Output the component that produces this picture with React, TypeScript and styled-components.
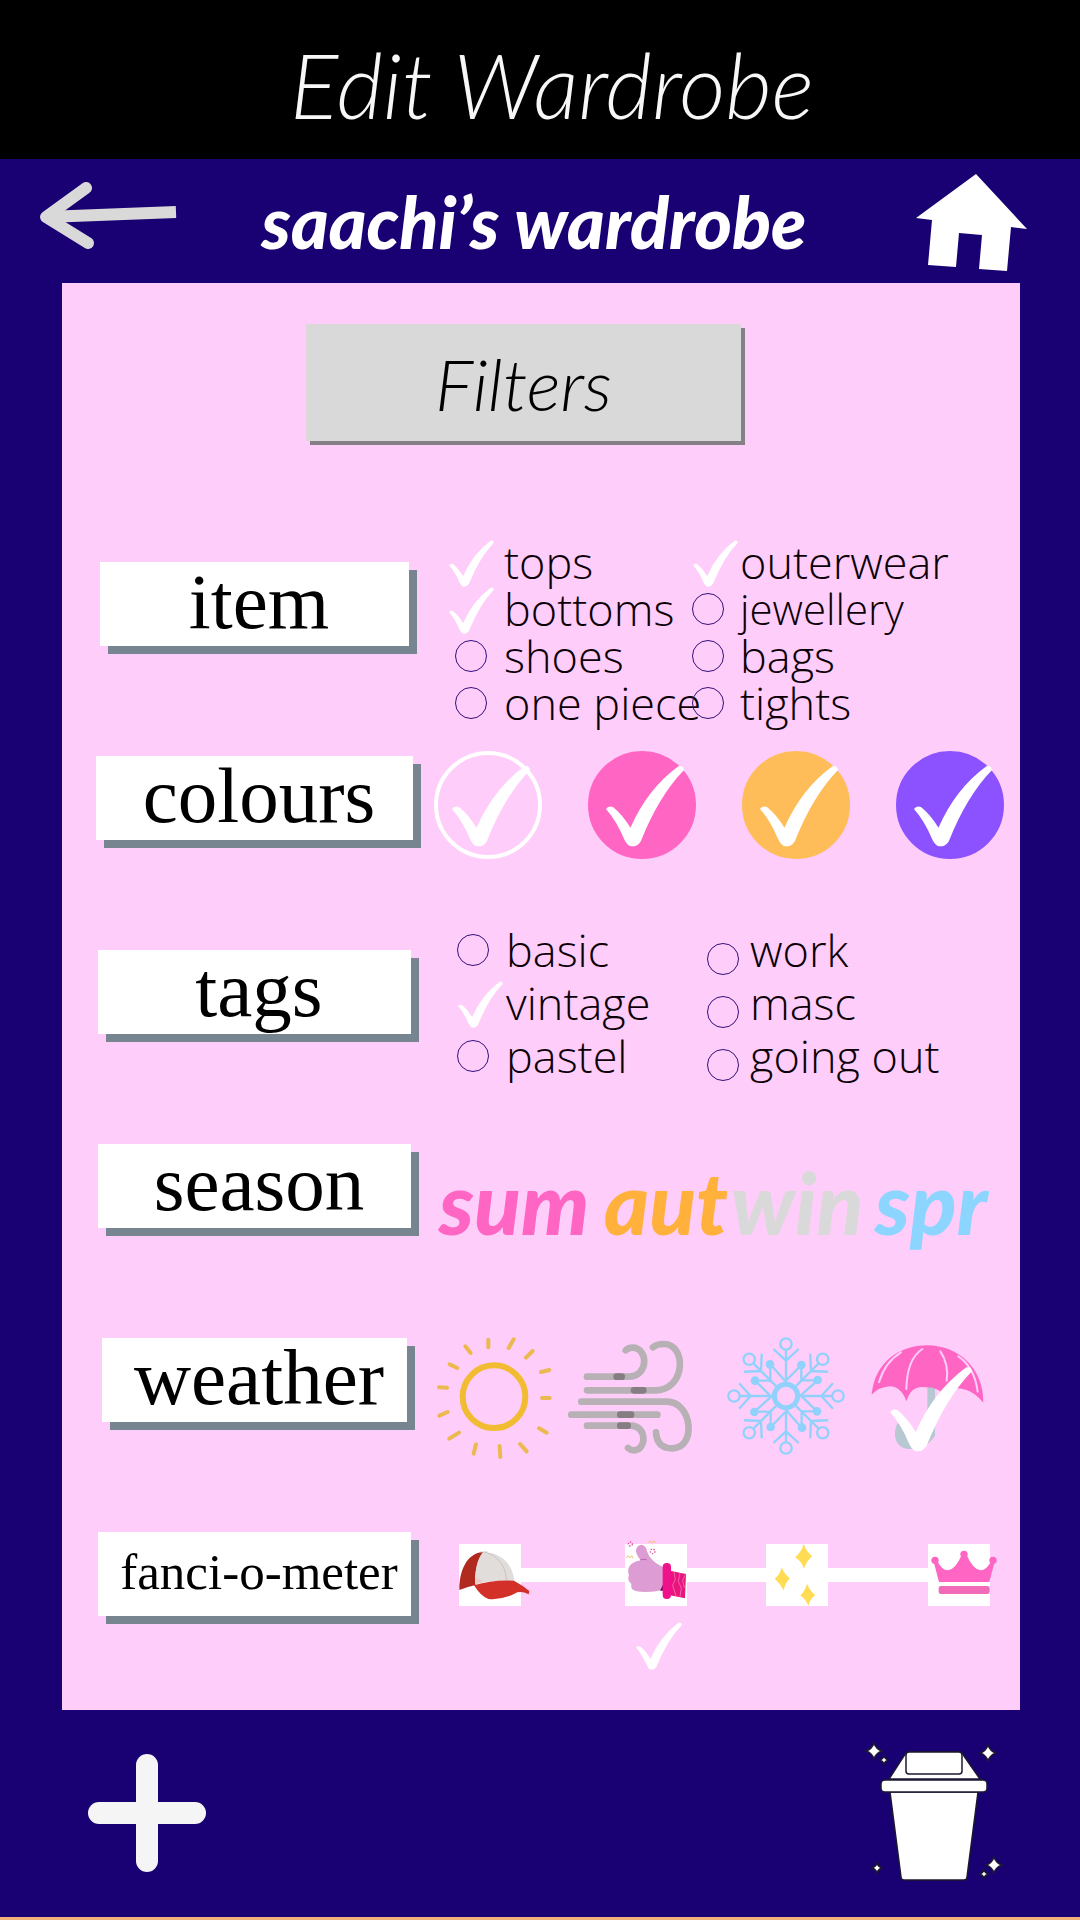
import React, { useState } from "react";
import styled, { createGlobalStyle } from "styled-components";

const color = {
  navy: "#190073",
  blush: "#ffcdfa",
  pink: "#ff66c4",
  orange: "#ffbd59",
  purple: "#8c52ff",
  grey: "#d9d9d9",
  shadow: "#778590",
};

const script = `Lato, "Open Sans", sans-serif`;

const GlobalStyle = createGlobalStyle`
  *, *::before, *::after { box-sizing: border-box; }
  body { margin: 0; background: ${color.navy}; }
  button { font: inherit; color: inherit; background: none; border: 0; padding: 0; cursor: pointer; }
  svg { display: block; overflow: visible; }
`;

const Page = styled.div`
  min-height: 100vh;
  display: flex;
  flex-direction: column;
  background: ${color.navy};
  border-bottom: 3px solid #f0b07c;
`;

const TopBar = styled.header`
  display: flex;
  align-items: center;
  justify-content: center;
  min-height: 159px;
  padding: 8px 0 0 24px;
  background: #000;
`;

const PageTitle = styled.h1`
  margin: 0;
  font: italic 300 90px/100px ${script};
  color: #f7f7f7;
`;

const NavBar = styled.nav`
  display: grid;
  grid-template-columns: 1fr auto 1fr;
  align-items: center;
  min-height: 124px;
  padding: 0 52px 0 40px;
`;

const NavLink = styled.a<{ $end?: boolean }>`
  justify-self: ${(p) => (p.$end ? "end" : "start")};
`;

const OwnerTitle = styled.h2`
  margin: 0;
  font: italic 900 72px/80px ${script};
  color: #fff;
`;

const Panel = styled.main`
  margin: 0 60px 0 62px;
  padding: 41px 16px 6px 34px;
  background: ${color.blush};
`;

const FiltersButton = styled.button`
  && {
    display: block;
    width: 435px;
    height: 117px;
    margin: 0 0 99px 210px;
    background: ${color.grey};
    box-shadow: 4px 4px 0 #858085;
    font: italic 300 72px/80px ${script};
    color: #000;
  }
`;

const Rows = styled.div`
  display: grid;
  grid-auto-rows: minmax(194px, auto);
`;

const Row = styled.section`
  display: grid;
  grid-template-columns: 317px 1fr;
  align-items: start;
`;

const RowLabel = styled.h3<{ $width: number; $small?: boolean }>`
  justify-self: center;
  width: ${(p) => p.$width}px;
  height: 84px;
  margin: 22px 0 0;
  padding-left: 9px;
  background: #fff;
  box-shadow: 8px 8px 0 ${color.shadow};
  font: 400 ${(p) => (p.$small ? 51 : 79)}px/80px "Liberation Serif", serif;
  text-align: center;
  white-space: nowrap;
  color: #000;
`;

const OptionColumns = styled.div<{ $indent: number; $first: number }>`
  display: grid;
  grid-template-columns: ${(p) => p.$first}px 1fr;
  padding-left: ${(p) => p.$indent}px;
`;

const OptionList = styled.div<{ $gap: number }>`
  display: flex;
  flex-direction: column;
  gap: ${(p) => p.$gap}px;
`;

const OptionLabel = styled.label<{ $marker: number; $small?: boolean }>`
  display: grid;
  grid-template-columns: ${(p) => p.$marker}px auto;
  justify-content: start;
  align-items: center;
  font: 300 ${(p) => (p.$small ? 42 : 45)}px/44px "Open Sans", sans-serif;
  white-space: nowrap;
  color: #0c0008;
  cursor: pointer;
`;

const Marker = styled.span<{ $inset: number; $drop: number }>`
  position: relative;
  display: flex;
  align-items: center;
  height: 44px;
  padding-left: ${(p) => p.$inset}px;
  padding-top: ${(p) => p.$drop}px;
`;

const RoundBox = styled.input`
  appearance: none;
  width: 32px;
  height: 32px;
  margin: 0;
  border: 1px solid #33107c;
  border-radius: 50%;
  &:checked { border-color: transparent; }
`;

const MarkerCheck = styled.span`
  position: absolute;
  left: 0;
  top: 0;
`;

const Swatches = styled.div`
  display: flex;
  justify-content: space-between;
  padding: 17px 0 0 21px;
`;

const Swatch = styled.label<{ $fill?: string }>`
  position: relative;
  width: 108px;
  height: 108px;
  border: 4px solid ${(p) => p.$fill ?? "#fff"};
  border-radius: 50%;
  background: ${(p) => p.$fill ?? "transparent"};
  cursor: pointer;
`;

const HiddenInput = styled.input`
  position: absolute;
  inset: 0;
  margin: 0;
  opacity: 0;
`;

const SwatchCheck = styled.span`
  position: absolute;
  left: 12px;
  top: 10px;
`;

const Seasons = styled.div`
  display: grid;
  grid-template-columns: 165px 127px 144px 1fr;
  justify-items: start;
  padding: 38px 0 0 26px;
  font: italic 900 86px/84px ${script};
`;

const SeasonButton = styled.button<{ $tone: string }>`
  && { color: ${(p) => p.$tone}; }
`;

const WeatherIcons = styled.div`
  display: grid;
  grid-template-columns: 130px 161px 144px 1fr;
  justify-items: start;
  align-items: center;
  padding: 18px 0 0 23px;
`;

const WeatherButton = styled.button`
  position: relative;
`;

const WeatherCheck = styled.span`
  position: absolute;
  left: 17px;
  top: 19px;
`;

const Meter = styled.div`
  display: flex;
  align-items: center;
  padding: 34px 0 0 46px;
`;

const MeterStop = styled.label`
  position: relative;
  width: 62px;
  height: 62px;
  background: #fff;
  cursor: pointer;
`;

const MeterLine = styled.span<{ $length: number }>`
  width: ${(p) => p.$length}px;
  height: 14px;
  background: #fff;
`;

const MeterCheck = styled.span`
  position: absolute;
  left: 10px;
  top: 78px;
`;

const Footer = styled.footer`
  flex: 1;
  display: flex;
  align-items: center;
  justify-content: space-between;
  min-height: 207px;
  padding: 0 78px 2px 88px;
`;

function Check({ size }: { size: number }) {
  return (
    <svg width={size} height={size} viewBox="1163 712 240 248" aria-hidden="true">
      <path
        fill="#fff"
        d="M1165 845Q1172 834 1186 839Q1215 862 1239 902Q1290 785 1384 716Q1398 711 1401 727Q1325 805 1270 943Q1257 962 1237 957Q1226 951 1218 932Q1196 880 1165 845Z"
      />
    </svg>
  );
}

function ArrowIcon() {
  return (
    <svg width="136" height="80" viewBox="40 182 136 80" fill="none" stroke={color.grey} strokeWidth="12" strokeLinejoin="round">
      <path d="M46 218L176 213" />
      <path d="M86 189L46 218L88 244" strokeLinecap="round" />
    </svg>
  );
}

function HomeIcon() {
  return (
    <svg width="112" height="102" viewBox="916 170 112 102">
      <path fill="#fff" d="M976 174L1027 229L1011 227L1007 271L979 269L982 235L959 233L956 267L928 265L932 220L916 218Z" />
    </svg>
  );
}

const sunRays = [
  [205, 95, 205, 118], [281, 94, 266, 120], [338, 129, 318, 149], [388, 186, 363, 192],
  [366, 270, 389, 270], [357, 361, 380, 374], [300, 408, 320, 430], [239, 414, 241, 447],
  [168, 409, 161, 437], [117, 374, 88, 392], [83, 312, 58, 323], [57, 238, 81, 239],
  [89, 169, 112, 180], [136, 115, 152, 135],
];

function SunIcon() {
  return (
    <svg width="118" height="128" viewBox="48 78 354 384" fill="none" stroke="#f2bc32" strokeLinecap="round">
      <circle cx="222" cy="266" r="94" strokeWidth="18" />
      {sunRays.map(([x1, y1, x2, y2]) => (
        <line key={`${x1}-${y1}`} x1={x1} y1={y1} x2={x2} y2={y2} stroke="#ecb850" strokeWidth="12" />
      ))}
    </svg>
  );
}

function WindIcon() {
  return (
    <svg width="126" height="118" viewBox="438 83 378 354" fill="none" stroke="#b7b0b4" strokeWidth="20" strokeLinecap="round">
      <path d="M501 196H625C688 196 685 109 637 109Q624 109 617 117" />
      <path d="M501 237H708C798 235 800 98 732 98Q710 98 699 108" />
      <path d="M484 271H740C818 271 830 411 757 411Q711 411 708 363" />
      <path d="M454 310H712M501 343H632C682 343 680 417 642 417Q632 417 624 410" />
      <path stroke="#857d82" d="M590 196H605M642 237H670M601 310H633M601 343H623" />
    </svg>
  );
}

function SnowIcon() {
  return (
    <svg width="118" height="122" viewBox="-177 -177 354 366" fill="none" stroke="#90d2fb" strokeWidth="7">
      <circle r="35" strokeWidth="15" />
      {[0, 45, 90, 135, 180, 225, 270, 315].map((angle) => (
        <g key={angle} transform={`rotate(${angle})`}>
          <path d="M0 -42V-139M-38 -141L0 -106L38 -141" />
          <circle cy="-156" r="17" />
        </g>
      ))}
      {[0, 90, 180, 270].map((angle) => (
        <g key={angle} transform={`rotate(${angle})`}>
          <path d="M46 -93V-47H95M46 -93L2 -48M95 -47L44 -2" />
          <circle cx="46" cy="-93" r="13" fill="#90d2fb" stroke="none" />
          <circle cx="95" cy="-48" r="13" fill="#90d2fb" stroke="none" />
        </g>
      ))}
    </svg>
  );
}

function UmbrellaIcon() {
  return (
    <svg width="113" height="102" viewBox="484 124 339 306">
      <path fill="#b7c8d2" d="M653 240H676V390Q650 430 598 430C560 428 545 390 564 352L610 380H653Z" />
      <path fill={color.blush} d="M565 352L608 335L653 330V380H610Z" />
      <path
        fill={color.pink}
        d="M486 267C495 170 570 119 652 119C750 120 822 190 821 291Q785 248 740 248Q722 248 706 268Q680 243 650 245Q605 236 590 287Q575 243 540 242Q505 245 486 267Z"
      />
      <path fill="none" stroke={color.blush} strokeWidth="6" strokeLinecap="round" d="M508 230Q525 170 574 140M590 250Q592 160 638 130M692 137Q718 175 711 225M746 152Q795 185 804 258" />
    </svg>
  );
}

function CapIcon() {
  return (
    <svg width="62" height="62" viewBox="87 99 186 186">
      <path fill="#b02a20" d="M88 237C88 165 120 124 160 123C140 150 133 190 137 222Q110 228 88 237Z" />
      <path fill="#e0dddb" d="M136 220C134 180 142 140 160 123C215 125 250 160 253 213Q190 205 136 220Z" />
      <path fill="none" stroke="#bdb7b5" strokeWidth="2" d="M165 123Q225 140 230 207M172 123H150" />
      <path fill="#edc9c3" d="M136 220Q136 208 140 199L160 213Z" />
      <path fill="#d3302a" d="M132 223Q190 205 252 209Q280 224 298 240L296 250Q278 240 262 244Q220 268 175 264Q152 256 132 223Z" />
    </svg>
  );
}

function ThumbIcon() {
  return (
    <svg width="62" height="62" viewBox="585 108 186 186">
      <path fill="#dd9cd3" d="M618 130Q618 112 634 110Q647 110 651 130Q660 160 700 178V245Q660 255 620 250Q600 245 604 228Q590 215 597 202Q589 180 605 167Q620 158 632 157Q620 142 618 130Z" />
      <path fill="none" stroke="#a34aa0" strokeWidth="2" d="M630 156Q640 152 650 155" />
      <path fill="#6a0d5a" d="M700 228L690 248H700Z" />
      <path fill="#e8157f" d="M720 188L768 198L765 271L720 262Z" />
      <path fill="none" stroke="#f78abd" strokeWidth="2" d="M732 192L736 215L728 232L738 264M750 195L745 220L754 240L750 266M766 200L758 218L763 240" />
      <rect x="698" y="165" width="25" height="108" rx="12" fill="#f0128a" />
      <g fill="none" stroke="#e2559a" strokeWidth="4" strokeDasharray="4 4">
        <circle cx="601" cy="108" r="6" />
        <circle cx="668" cy="130" r="7" />
      </g>
      <path fill="none" stroke="#efc27a" strokeWidth="3" d="M590 150L594 143L600 150L605 143L610 151M655 105L660 98L666 105L671 98L676 105" />
    </svg>
  );
}

function SparkleIcon() {
  return (
    <svg width="62" height="62" viewBox="138 108 186 186" fill="#ffdc54">
      <path d="M251 107Q259 132 277 144Q261 157 252 182Q243 158 225 147Q245 133 251 107Z" />
      <path d="M185 178Q194 200 210 211Q196 224 191 247Q181 226 164 212Q180 201 185 178Z" />
      <path d="M261 227Q269 248 286 261Q270 272 265 293Q257 272 241 263Q255 249 261 227Z" />
    </svg>
  );
}

function CrownIcon() {
  return (
    <svg width="62" height="62" viewBox="622 99 186 186" fill={color.pink}>
      <circle cx="643" cy="148" r="11" />
      <circle cx="730" cy="130" r="11" />
      <circle cx="817" cy="148" r="11" />
      <path d="M639 152L655 213H806L822 152L812 150Q797 178 780 178Q757 176 738 132H723Q704 176 682 178Q663 178 650 150Z" />
      <rect x="654" y="225" width="153" height="24" rx="7" fill="#f26bb9" />
    </svg>
  );
}

function PlusIcon() {
  return (
    <svg width="118" height="118" viewBox="0 0 118 118" fill="#f5f5f6">
      <rect x="48" width="22" height="118" rx="11" />
      <rect y="48" width="118" height="22" rx="11" />
    </svg>
  );
}

const trashStars = [
  [8, 8, 8], [18, 17, 4], [122, 10, 8], [11, 125, 5], [128, 122, 8], [118, 131, 4],
];

function TrashIcon() {
  return (
    <svg width="136" height="140" viewBox="0 0 136 140" fill="#fff" stroke="#1c1830" strokeWidth="1.500">
      <path d="M23 36L38 13Q40 9 44 9H92Q96 9 98 13L114 36Z" />
      <rect x="40" y="9" width="56" height="22" rx="3" />
      <path d="M24 49H112L101 134Q101 137 98 137H38Q35 137 35 134Z" />
      <rect x="15" y="37" width="106" height="12" rx="4" />
      {trashStars.map(([x, y, r]) => (
        <path
          key={`${x}-${y}`}
          d={`M${x} ${y - r}Q${x + r / 4} ${y - r / 4} ${x + r} ${y}Q${x + r / 4} ${y + r / 4} ${x} ${y + r}Q${x - r / 4} ${y + r / 4} ${x - r} ${y}Q${x - r / 4} ${y - r / 4} ${x} ${y - r}Z`}
        />
      ))}
    </svg>
  );
}

type OptionItem = { name: string; checked?: boolean; small?: boolean };

function Option({ item, marker, inset, drop }: { item: OptionItem; marker: number; inset: number; drop: number }) {
  const [on, setOn] = useState(Boolean(item.checked));
  return (
    <OptionLabel $marker={marker} $small={item.small}>
      <Marker $inset={inset} $drop={drop}>
        <RoundBox type="checkbox" checked={on} onChange={() => setOn(!on)} />
        {on && <MarkerCheck><Check size={47} /></MarkerCheck>}
      </Marker>
      {item.name}
    </OptionLabel>
  );
}

type OptionsProps = { items: OptionItem[]; gap: number; marker: number; inset?: number; drop?: number };

function Options({ items, gap, marker, inset = 0, drop = 0 }: OptionsProps) {
  return (
    <OptionList $gap={gap}>
      {items.map((item) => (
        <Option key={item.name} item={item} marker={marker} inset={inset} drop={drop} />
      ))}
    </OptionList>
  );
}

const swatches = [
  { name: "white" },
  { name: "pink", fill: color.pink },
  { name: "orange", fill: color.orange },
  { name: "purple", fill: color.purple },
];

function ColourSwatch({ name, fill }: { name: string; fill?: string }) {
  const [on, setOn] = useState(true);
  return (
    <Swatch $fill={fill}>
      <HiddenInput type="checkbox" aria-label={name} checked={on} onChange={() => setOn(!on)} />
      {on && <SwatchCheck><Check size={82} /></SwatchCheck>}
    </Swatch>
  );
}

const stops = [
  { name: "casual", icon: <CapIcon />, line: 104 },
  { name: "nice", icon: <ThumbIcon />, line: 79 },
  { name: "sparkly", icon: <SparkleIcon />, line: 100 },
  { name: "royal", icon: <CrownIcon />, line: 0 },
];

export default function App() {
  const [stop, setStop] = useState("nice");
  const [rain, setRain] = useState(true);

  return (
    <>
      <GlobalStyle />
      <Page>
        <TopBar>
          <PageTitle>Edit Wardrobe</PageTitle>
        </TopBar>
        <NavBar>
          <NavLink href="#back" aria-label="Back"><ArrowIcon /></NavLink>
          <OwnerTitle>saachi’s wardrobe</OwnerTitle>
          <NavLink href="#home" aria-label="Home" $end><HomeIcon /></NavLink>
        </NavBar>

        <Panel>
          <FiltersButton type="button">Filters</FiltersButton>
          <Rows>
            <Row>
              <RowLabel $width={309}>item</RowLabel>
              <OptionColumns $indent={35} $first={244}>
                <Options
                  gap={3}
                  marker={56}
                  inset={7}
                  items={[{ name: "tops", checked: true }, { name: "bottoms", checked: true }, { name: "shoes" }, { name: "one piece" }]}
                />
                <Options
                  gap={3}
                  marker={48}
                  items={[{ name: "outerwear", checked: true }, { name: "jewellery", small: true }, { name: "bags" }, { name: "tights" }]}
                />
              </OptionColumns>
            </Row>

            <Row>
              <RowLabel $width={317}>colours</RowLabel>
              <Swatches>
                {swatches.map((s) => <ColourSwatch key={s.name} name={s.name} fill={s.fill} />)}
              </Swatches>
            </Row>

            <Row>
              <RowLabel $width={313}>tags</RowLabel>
              <OptionColumns $indent={44} $first={250}>
                <Options
                  gap={9}
                  marker={49}
                  items={[{ name: "basic" }, { name: "vintage", checked: true }, { name: "pastel" }]}
                />
                <Options
                  gap={9}
                  marker={43}
                  drop={18}
                  items={[{ name: "work" }, { name: "masc" }, { name: "going out" }]}
                />
              </OptionColumns>
            </Row>

            <Row>
              <RowLabel $width={313}>season</RowLabel>
              <Seasons>
                <SeasonButton type="button" $tone={color.pink}>sum</SeasonButton>
                <SeasonButton type="button" $tone="#ffb13c">aut</SeasonButton>
                <SeasonButton type="button" $tone={color.grey}>win</SeasonButton>
                <SeasonButton type="button" $tone="#8cd5ff">spr</SeasonButton>
              </Seasons>
            </Row>

            <Row>
              <RowLabel $width={305}>weather</RowLabel>
              <WeatherIcons>
                <WeatherButton type="button" aria-label="Sun"><SunIcon /></WeatherButton>
                <WeatherButton type="button" aria-label="Wind"><WindIcon /></WeatherButton>
                <WeatherButton type="button" aria-label="Snow"><SnowIcon /></WeatherButton>
                <WeatherButton type="button" aria-label="Rain" aria-pressed={rain} onClick={() => setRain(!rain)}>
                  <UmbrellaIcon />
                  {rain && <WeatherCheck><Check size={86} /></WeatherCheck>}
                </WeatherButton>
              </WeatherIcons>
            </Row>

            <Row>
              <RowLabel $width={313} $small>fanci-o-meter</RowLabel>
              <Meter>
                {stops.map((s) => (
                  <React.Fragment key={s.name}>
                    <MeterStop>
                      <HiddenInput
                        type="radio"
                        name="fanciness"
                        aria-label={s.name}
                        checked={stop === s.name}
                        onChange={() => setStop(s.name)}
                      />
                      {s.icon}
                      {stop === s.name && <MeterCheck><Check size={48} /></MeterCheck>}
                    </MeterStop>
                    {s.line > 0 && <MeterLine $length={s.line} />}
                  </React.Fragment>
                ))}
              </Meter>
            </Row>
          </Rows>
        </Panel>

        <Footer>
          <button type="button" aria-label="Add"><PlusIcon /></button>
          <button type="button" aria-label="Delete"><TrashIcon /></button>
        </Footer>
      </Page>
    </>
  );
}
